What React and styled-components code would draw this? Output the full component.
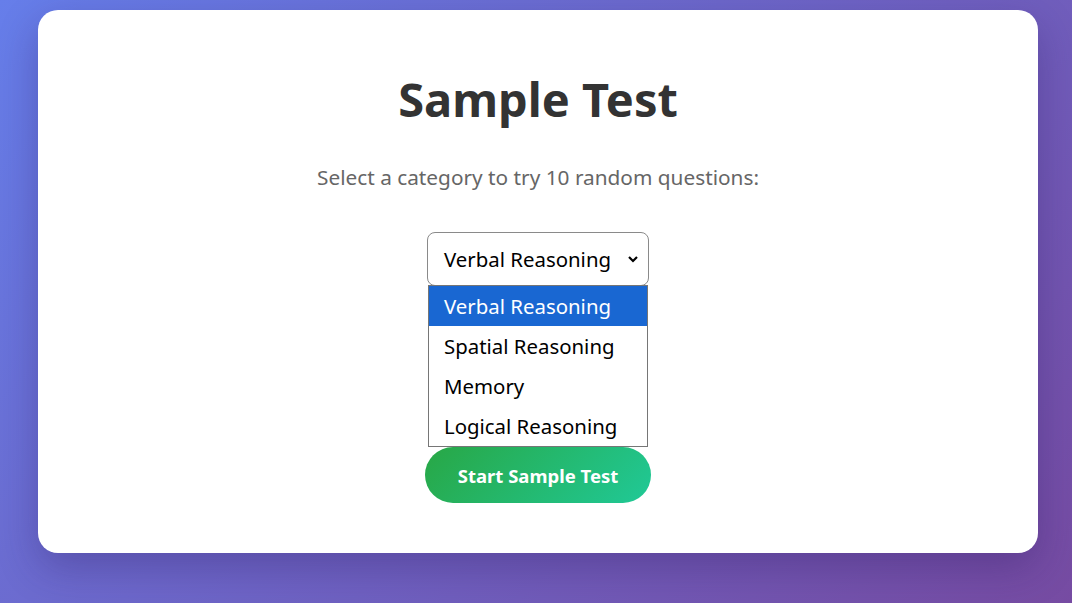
import React from "react";
import styled, { createGlobalStyle } from "styled-components";

const Global = createGlobalStyle`
  html, body { margin: 0; padding: 0; }
  body {
    min-height: 603px;
    background: linear-gradient(135deg, #667eea 0%, #764ba2 100%);
    font-family: "Noto Sans", "Open Sans", sans-serif;
  }
`;

const Page = styled.div`
  display: flex;
  justify-content: center;
  padding: 10px 0 50px 4px;
  height: 603px;
  box-sizing: border-box;
`;

const Card = styled.div`
  width: 1000px;
  height: 543px;
  box-sizing: border-box;
  background: #fff;
  border-radius: 20px;
  box-shadow: 0 15px 40px rgba(40, 20, 90, 0.3);
  display: flex;
  flex-direction: column;
  align-items: center;
  padding-top: 60px;
`;

const Title = styled.h1`
  margin: 0;
  font-size: 47px;
  line-height: 58px;
  font-weight: 700;
  color: #333;
`;

const Subtitle = styled.p`
  margin: 35px 0 0;
  font-size: 20.8px;
  line-height: 28px;
  color: #666;
`;

const SelectWrap = styled.div`
  position: relative;
  margin-top: 41px;
`;

const SelectBox = styled.div`
  width: 222px;
  height: 54px;
  box-sizing: border-box;
  border: 1px solid #8a8a8a;
  border-radius: 8px;
  display: flex;
  align-items: center;
  justify-content: space-between;
  padding: 0 7px 0 16px;
  font-size: 20.4px;
  color: #000;
  background: #fff;
`;

const Chevron = styled.svg`
  width: 16px;
  height: 16px;
`;

const List = styled.ul`
  position: absolute;
  left: 1px;
  top: 53px;
  width: 220px;
  box-sizing: border-box;
  margin: 0;
  padding: 0;
  list-style: none;
  border: 1px solid #767676;
  background: #fff;
  z-index: 2;
`;

const Item = styled.li`
  height: 40px;
  line-height: 40px;
  padding-left: 15px;
  font-size: 20.4px;
  color: ${(p) => (p.$active ? "#fff" : "#000")};
  background: ${(p) => (p.$active ? "#1967d2" : "transparent")};
  white-space: nowrap;
`;

const StartButton = styled.button`
  margin-top: 161px;
  width: 226px;
  height: 56px;
  border: none;
  border-radius: 28px;
  background: linear-gradient(135deg, #28a745 0%, #20c997 100%);
  color: #fff;
  font-family: "Noto Sans", "Open Sans", sans-serif;
  font-size: 18.5px;
  font-weight: 700;
  cursor: pointer;
`;

const options = ["Verbal Reasoning", "Spatial Reasoning", "Memory", "Logical Reasoning"];

export default function App() {
  return (
    <>
      <Global />
      <Page>
        <Card>
          <Title>Sample Test</Title>
          <Subtitle>Select a category to try 10 random questions:</Subtitle>
          <SelectWrap>
            <SelectBox>
              <span>Verbal Reasoning</span>
              <Chevron viewBox="0 0 16 16">
                <path d="M4 6 L8 10 L12 6" fill="none" stroke="#000" strokeWidth="2.2" />
              </Chevron>
            </SelectBox>
            <List>
              {options.map((o, i) => (
                <Item key={o} $active={i === 0}>{o}</Item>
              ))}
            </List>
          </SelectWrap>
          <StartButton>Start Sample Test</StartButton>
        </Card>
      </Page>
    </>
  );
}
